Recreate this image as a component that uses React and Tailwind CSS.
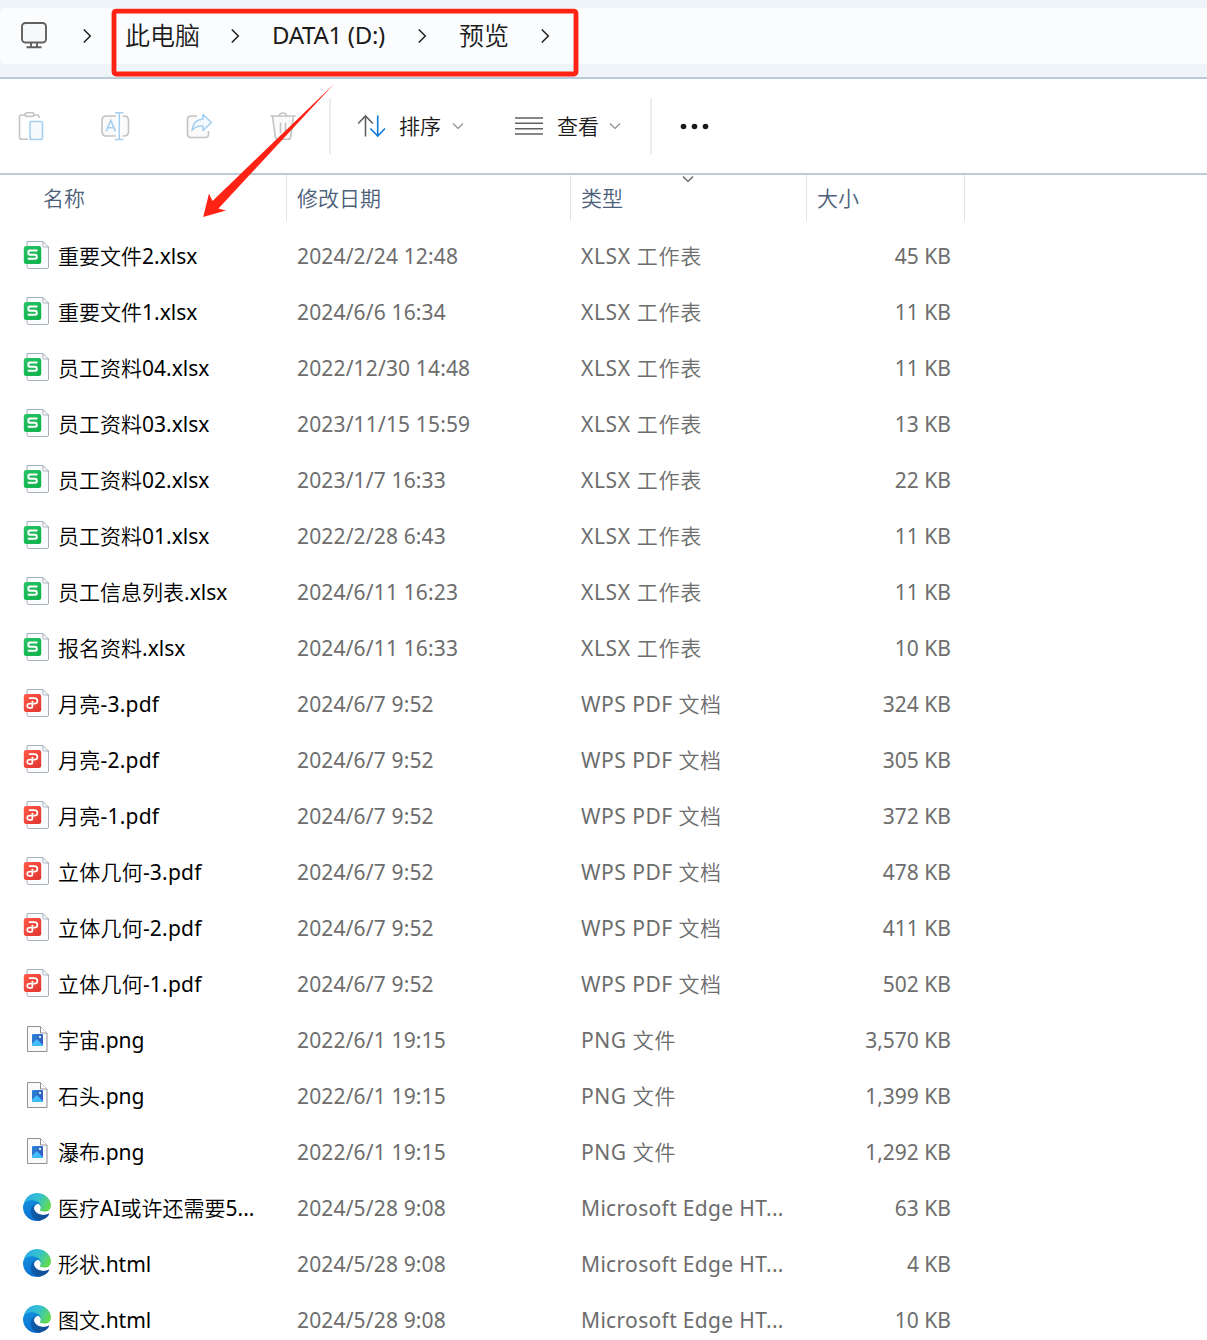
import clsx from 'clsx';

const files = [
    { name: '重要文件2.xlsx', date: '2024/2/24 12:48', kind: 'xlsx', size: '45 KB' },
    { name: '重要文件1.xlsx', date: '2024/6/6 16:34', kind: 'xlsx', size: '11 KB' },
    { name: '员工资料04.xlsx', date: '2022/12/30 14:48', kind: 'xlsx', size: '11 KB' },
    { name: '员工资料03.xlsx', date: '2023/11/15 15:59', kind: 'xlsx', size: '13 KB' },
    { name: '员工资料02.xlsx', date: '2023/1/7 16:33', kind: 'xlsx', size: '22 KB' },
    { name: '员工资料01.xlsx', date: '2022/2/28 6:43', kind: 'xlsx', size: '11 KB' },
    { name: '员工信息列表.xlsx', date: '2024/6/11 16:23', kind: 'xlsx', size: '11 KB' },
    { name: '报名资料.xlsx', date: '2024/6/11 16:33', kind: 'xlsx', size: '10 KB' },
    { name: '月亮-3.pdf', date: '2024/6/7 9:52', kind: 'pdf', size: '324 KB' },
    { name: '月亮-2.pdf', date: '2024/6/7 9:52', kind: 'pdf', size: '305 KB' },
    { name: '月亮-1.pdf', date: '2024/6/7 9:52', kind: 'pdf', size: '372 KB' },
    { name: '立体几何-3.pdf', date: '2024/6/7 9:52', kind: 'pdf', size: '478 KB' },
    { name: '立体几何-2.pdf', date: '2024/6/7 9:52', kind: 'pdf', size: '411 KB' },
    { name: '立体几何-1.pdf', date: '2024/6/7 9:52', kind: 'pdf', size: '502 KB' },
    { name: '宇宙.png', date: '2022/6/1 19:15', kind: 'png', size: '3,570 KB' },
    { name: '石头.png', date: '2022/6/1 19:15', kind: 'png', size: '1,399 KB' },
    { name: '瀑布.png', date: '2022/6/1 19:15', kind: 'png', size: '1,292 KB' },
    { name: '医疗AI或许还需要5...', date: '2024/5/28 9:08', kind: 'html', size: '63 KB' },
    { name: '形状.html', date: '2024/5/28 9:08', kind: 'html', size: '4 KB' },
    { name: '图文.html', date: '2024/5/28 9:08', kind: 'html', size: '10 KB' },
];

const kinds = {
    xlsx: { label: 'XLSX 工作表', spacing: 'tracking-[0.65px]', nameSpacing: '' },
    pdf: { label: 'WPS PDF 文档', spacing: 'tracking-[0.5px]', nameSpacing: 'tracking-[0.22px]' },
    png: { label: 'PNG 文件', spacing: 'tracking-[0.6px]', nameSpacing: '' },
    html: { label: 'Microsoft Edge HT...', spacing: 'tracking-[0.33px]', nameSpacing: '' },
};

// Shared gradients for the file icons
function IconDefs() {
    return (
        <svg width="0" height="0" className="absolute">
            <defs>
                <linearGradient id="sheet" x1="0" y1="0" x2="1" y2="1">
                    <stop offset="0" stopColor="#27c264" />
                    <stop offset="1" stopColor="#10b04a" />
                </linearGradient>
                <linearGradient id="pdf" x1="0" y1="0" x2="1" y2="1">
                    <stop offset="0" stopColor="#ff5a47" />
                    <stop offset="1" stopColor="#e0342f" />
                </linearGradient>
                <linearGradient id="photo" x1="0" y1="0" x2="1" y2="1">
                    <stop offset="0" stopColor="#2a86d8" />
                    <stop offset="1" stopColor="#3153b4" />
                </linearGradient>
                <linearGradient id="edgeTop" x1="0" y1="0.2" x2="1" y2="0.6">
                    <stop offset="0" stopColor="#2aa9ea" />
                    <stop offset="0.5" stopColor="#35c1d0" />
                    <stop offset="1" stopColor="#62dc4c" />
                </linearGradient>
                <linearGradient id="edgeSide" x1="0" y1="0" x2="0.4" y2="1">
                    <stop offset="0" stopColor="#1590e0" />
                    <stop offset="1" stopColor="#0a6fd0" />
                </linearGradient>
                <linearGradient id="edgeBase" x1="0" y1="0" x2="1" y2="1">
                    <stop offset="0" stopColor="#0f65b8" />
                    <stop offset="1" stopColor="#124a8e" />
                </linearGradient>
            </defs>
        </svg>
    );
}

function WpsIcon({ fill, children }) {
    return (
        <svg width="28" height="30" viewBox="0 0 28 30" fill="none">
            <path d="M5 1.5H21L26.5 7V27Q26.5 28.5 25 28.5H7Q5 28.5 5 26.5V3Q5 1.5 6.5 1.5Z" fill="#fbfcff" stroke="#a9afba" />
            <path d="M21 1.5V5.5Q21 7 22.5 7H26.5" stroke="#a9afba" />
            <rect x="1.8" y="6" width="17.4" height="18" rx="2.5" fill={fill} />
            {children}
        </svg>
    );
}

function FileIcon({ kind }) {
    if (kind === 'xlsx') {
        return (
            <WpsIcon fill="url(#sheet)">
                <path d="M15.5 10.6H8Q6.4 10.6 6.4 12V13.2Q6.4 14.7 8 14.7H13.2Q14.7 14.7 14.7 16.2V17.3Q14.7 18.8 13.2 18.8H5.8" stroke="#fff" strokeWidth="2" />
            </WpsIcon>
        );
    }
    if (kind === 'pdf') {
        return (
            <WpsIcon fill="url(#pdf)">
                <path d="M7.6 10.2H12.4Q15.4 10.2 15.4 12.9T12.4 15.6H8Q5.2 15.6 5.2 17.7T7.6 19.8H9.4Q10.4 19.8 10.4 18.8V13.6" stroke="#fff" strokeWidth="1.7" strokeLinecap="round" strokeLinejoin="round" />
            </WpsIcon>
        );
    }
    if (kind === 'png') {
        return (
            <svg width="28" height="30" viewBox="0 0 28 30" fill="none">
                <path d="M5.5 2.5H18.5L25 9V27.5H5.5Z" fill="#fafafa" stroke="#929292" />
                <path d="M18.5 2.5V9H25" fill="#fff" stroke="#929292" />
                <rect x="10" y="10" width="11" height="12" rx="1" fill="url(#photo)" />
                <path d="M10 19.5L14.2 15.4Q14.8 14.9 15.4 15.4L21 21V22H10Z" fill="#43b9f5" />
                <circle cx="18" cy="13" r="1.1" fill="#fff" />
            </svg>
        );
    }
    return (
        <svg width="28" height="28" viewBox="0 0 28 28" className="ml-px">
            <path d="M0.5 12C1.5 5 7 0 14 0C22 0 28 6 28 12.5C28 16.6 24.8 18.8 21.2 18.8C18 18.8 16.2 17.8 16.8 16.6C18.6 14.4 17.5 8.5 10.5 8C5.5 7.6 1.8 9.5 0.5 12Z" fill="url(#edgeTop)" />
            <path d="M0 14C0 9.5 4.6 7 9.5 7.2C14.5 7.4 17.8 10.5 17.8 13.6C14.8 10.6 9.6 13 9.6 18C9.6 23 13.5 27 18 27.4C9 30 0 23.8 0 14Z" fill="url(#edgeSide)" />
            <path d="M12.6 10.8C9 12.5 7 16 7.8 20C8.8 25.3 13.5 27.8 17.5 27.5C21.4 26.8 24.5 24.4 26.2 21.3C26.5 20.7 26 20.4 25.4 20.7C20.5 23 12.6 21.6 11.4 15.5C11.1 13.3 11.4 11.7 12.6 10.8Z" fill="url(#edgeBase)" />
            <path d="M14.3 11C12 12 10.8 14 11.3 16C12.5 21 20 22.6 25.4 20.4L27.2 16.8C25.6 18.2 23.5 18.8 21.2 18.8C18 18.8 16.2 17.8 16.8 16.6C17.6 15.4 17.5 13.6 16.9 12.4C16.3 11.2 15.4 10.7 14.3 11Z" fill="#fff" />
        </svg>
    );
}

function Crumb({ className }) {
    return (
        <svg width="10" height="16" viewBox="0 0 10 16" fill="none" className={clsx('shrink-0', className)}>
            <path d="M1.8 1.5L8.3 8L1.8 14.5" stroke="#1f1f1f" strokeWidth="1.5" />
        </svg>
    );
}

function Caret({ className }) {
    return (
        <svg width="12" height="8" viewBox="0 0 12 8" fill="none" className={clsx('shrink-0', className)}>
            <path d="M1 1.5L6 6.5L11 1.5" stroke="currentColor" strokeWidth="1.1" />
        </svg>
    );
}

function AddressBar() {
    return (
        <div className="h-[79px] border-b-2 border-[#bccbd9] bg-[#eff4f9] pt-2">
            <div className="flex h-14 items-center rounded-l-md bg-[#fbfcfe] pl-5 text-[25px] font-[350] whitespace-nowrap text-[#1b1b1b]">
                <svg width="28" height="28" viewBox="0 0 28 28" fill="none" stroke="#606060" strokeWidth="1.9" className="mt-[-2px]">
                    <rect x="2" y="2" width="24" height="19.5" rx="3.5" fill="#f7f8f9" />
                    <path d="M11 21.5V26M17 21.5V26M6.5 26.2H21.5" />
                </svg>
                <Crumb className="ml-[34px]" />
                <span className="mt-[-2px] ml-[33px] w-[75px]">此电脑</span>
                <Crumb className="ml-[30px]" />
                <span className="mt-[-3px] ml-[32px] w-[116px] text-[24px] font-normal tracking-[-0.3px]">DATA1 (D:)</span>
                <Crumb className="ml-[29px]" />
                <span className="mt-[-1px] ml-[32px] w-[50px]">预览</span>
                <Crumb className="ml-[31px]" />
            </div>
        </div>
    );
}

function Toolbar() {
    return (
        <div className="flex h-24 items-center border-b-2 border-[#bccbd9] pl-[17px] text-[21px] font-[350] text-[#1b1b1b]">
            <svg width="28" height="30" viewBox="0 0 28 30" fill="none" strokeWidth="1.6">
                <path d="M11 28.3H4.5Q2.5 28.3 2.5 26.3V6Q2.5 4 4.5 4H8M17 4H20Q22 4 22 6V7" stroke="#c3c3c3" />
                <rect x="8" y="1.8" width="9" height="3.6" rx="1.8" fill="#fff" stroke="#c3c3c3" />
                <rect x="13" y="10.5" width="12.5" height="18" rx="1.8" fill="#f7fafd" stroke="#a4cff0" />
            </svg>
            <svg width="30" height="30" viewBox="0 0 30 30" fill="none" strokeWidth="1.6" className="ml-[55px]">
                <path d="M16 5H6.5Q2 5 2 9.5V20.5Q2 25 6.5 25H16M22.5 5H24Q28.5 5 28.5 9.5V20.5Q28.5 25 24 25H22.5" fill="#fafafa" stroke="#c3c3c3" />
                <path d="M6 20.5L10.8 9.5L15.6 20.5M7.6 16.8H14M19.3 2V28.5M15 1.8H23.5M15 28.5H23.5" stroke="#a4cff0" />
            </svg>
            <svg width="28" height="30" viewBox="0 0 28 30" fill="none" strokeWidth="1.6" className="ml-[55px]">
                <path d="M12 5H6Q2.5 5 2.5 8.5V23Q2.5 26.5 6 26.5H20Q23.5 26.5 23.5 23V20" fill="#fafafa" stroke="#c3c3c3" />
                <path d="M18 3.5L26.5 11.5L18 19.5V15Q10.5 14.5 7 19.5Q8.3 8.8 18 8Z" fill="#f7fafd" stroke="#a4cff0" strokeLinejoin="round" />
            </svg>
            <svg width="28" height="30" viewBox="0 0 28 30" fill="none" stroke="#c3c3c3" strokeWidth="1.6" className="ml-[56px]">
                <path d="M3.5 5L6.3 25.8Q6.6 28.2 9 28.2H19Q21.4 28.2 21.7 25.8L24.5 5" fill="#fafafa" />
                <path d="M1.2 5H26.8M10.3 5Q10.3 2 14 2T17.7 5M11.5 11.5V22M16.5 11.5V22" />
            </svg>
            <div className="ml-8 h-14 w-[2px] bg-[#ededed]"></div>
            <svg width="30" height="24" viewBox="0 0 30 24" fill="none" strokeWidth="1.6" className="ml-[26px]">
                <path d="M8.5 22.5V2M1.2 9.5L8.5 2L15.8 9.5" stroke="#606060" />
                <path d="M20.7 1.5V22M13.4 14.5L20.7 22L28 14.5" stroke="#0f7bd8" />
            </svg>
            <span className="ml-[12px]">排序</span>
            <Caret className="ml-[11px] text-[#8a8a8a]" />
            <svg width="28" height="20" viewBox="0 0 28 20" stroke="#606060" strokeWidth="1.6" className="ml-[51px]">
                <path d="M0 2H28M0 7.3H28M0 12.7H28M0 18H28" />
            </svg>
            <span className="ml-[14px]">查看</span>
            <Caret className="ml-[10px] text-[#8a8a8a]" />
            <div className="ml-[29px] h-14 w-[2px] bg-[#ededed]"></div>
            <svg width="30" height="8" viewBox="0 0 30 8" fill="#1b1b1b" className="ml-[27px]">
                <circle cx="4.5" cy="4.5" r="2.8" />
                <circle cx="15.5" cy="4.5" r="2.8" />
                <circle cx="26.5" cy="4.5" r="2.8" />
            </svg>
        </div>
    );
}

function HeaderRow() {
    return (
        <div className="relative grid h-[46px] w-[965px] grid-cols-[287px_284px_236px_158px] text-[21px] font-[350] text-[#4c607a]">
            <div className="flex items-center border-r border-[#e2e2e2] pl-[43px]">名称</div>
            <div className="flex items-center border-r border-[#e2e2e2] pl-[10px]">修改日期</div>
            <div className="flex items-center border-r border-[#e2e2e2] pl-[10px]">类型</div>
            <div className="flex items-center border-r border-[#e2e2e2] pl-[10px]">大小</div>
            <Caret className="absolute top-0 left-[682px] text-[#555]" />
        </div>
    );
}

function FileRow({ file }) {
    const kind = kinds[file.kind];

    return (
        <div className="grid h-14 w-[965px] grid-cols-[297px_284px_226px_144px] items-center text-[21px] whitespace-nowrap text-[#6d6d6d]">
            <div className="flex items-center text-black">
                <div className="mt-[-2px] flex w-[58px] pl-[22px]">
                    <FileIcon kind={file.kind} />
                </div>
                <span className={kind.nameSpacing}>{file.name}</span>
            </div>
            <span className="tracking-[0.15px]">{file.date}</span>
            <span className={kind.spacing}>{kind.label}</span>
            <span className="text-right">{file.size}</span>
        </div>
    );
}

// Red frame round the path and the arrow that points at the list
function Annotation() {
    return (
        <svg width="600" height="230" viewBox="0 0 600 230" fill="none" className="pointer-events-none absolute top-0 left-0">
            <rect x="114" y="11.2" width="462" height="62.8" rx="2" stroke="#ff2315" strokeWidth="4.8" />
            <path d="M334 84L212.5 201L209 193.5L203.2 217L226 210.5L218.5 208.5Z" fill="#ff2315" />
        </svg>
    );
}

export default function App() {
    return (
        <div className="relative h-[1340px] w-[1207px] overflow-hidden bg-white font-['Noto_Sans','Noto_Sans_CJK_SC_DemiLight','Noto_Sans_CJK_SC',sans-serif] leading-none">
            <IconDefs />
            <AddressBar />
            <Toolbar />
            <HeaderRow />
            <div className="pt-[7px]">
                {files.map((file) => (
                    <FileRow key={file.name} file={file} />
                ))}
            </div>
            <Annotation />
        </div>
    );
}
